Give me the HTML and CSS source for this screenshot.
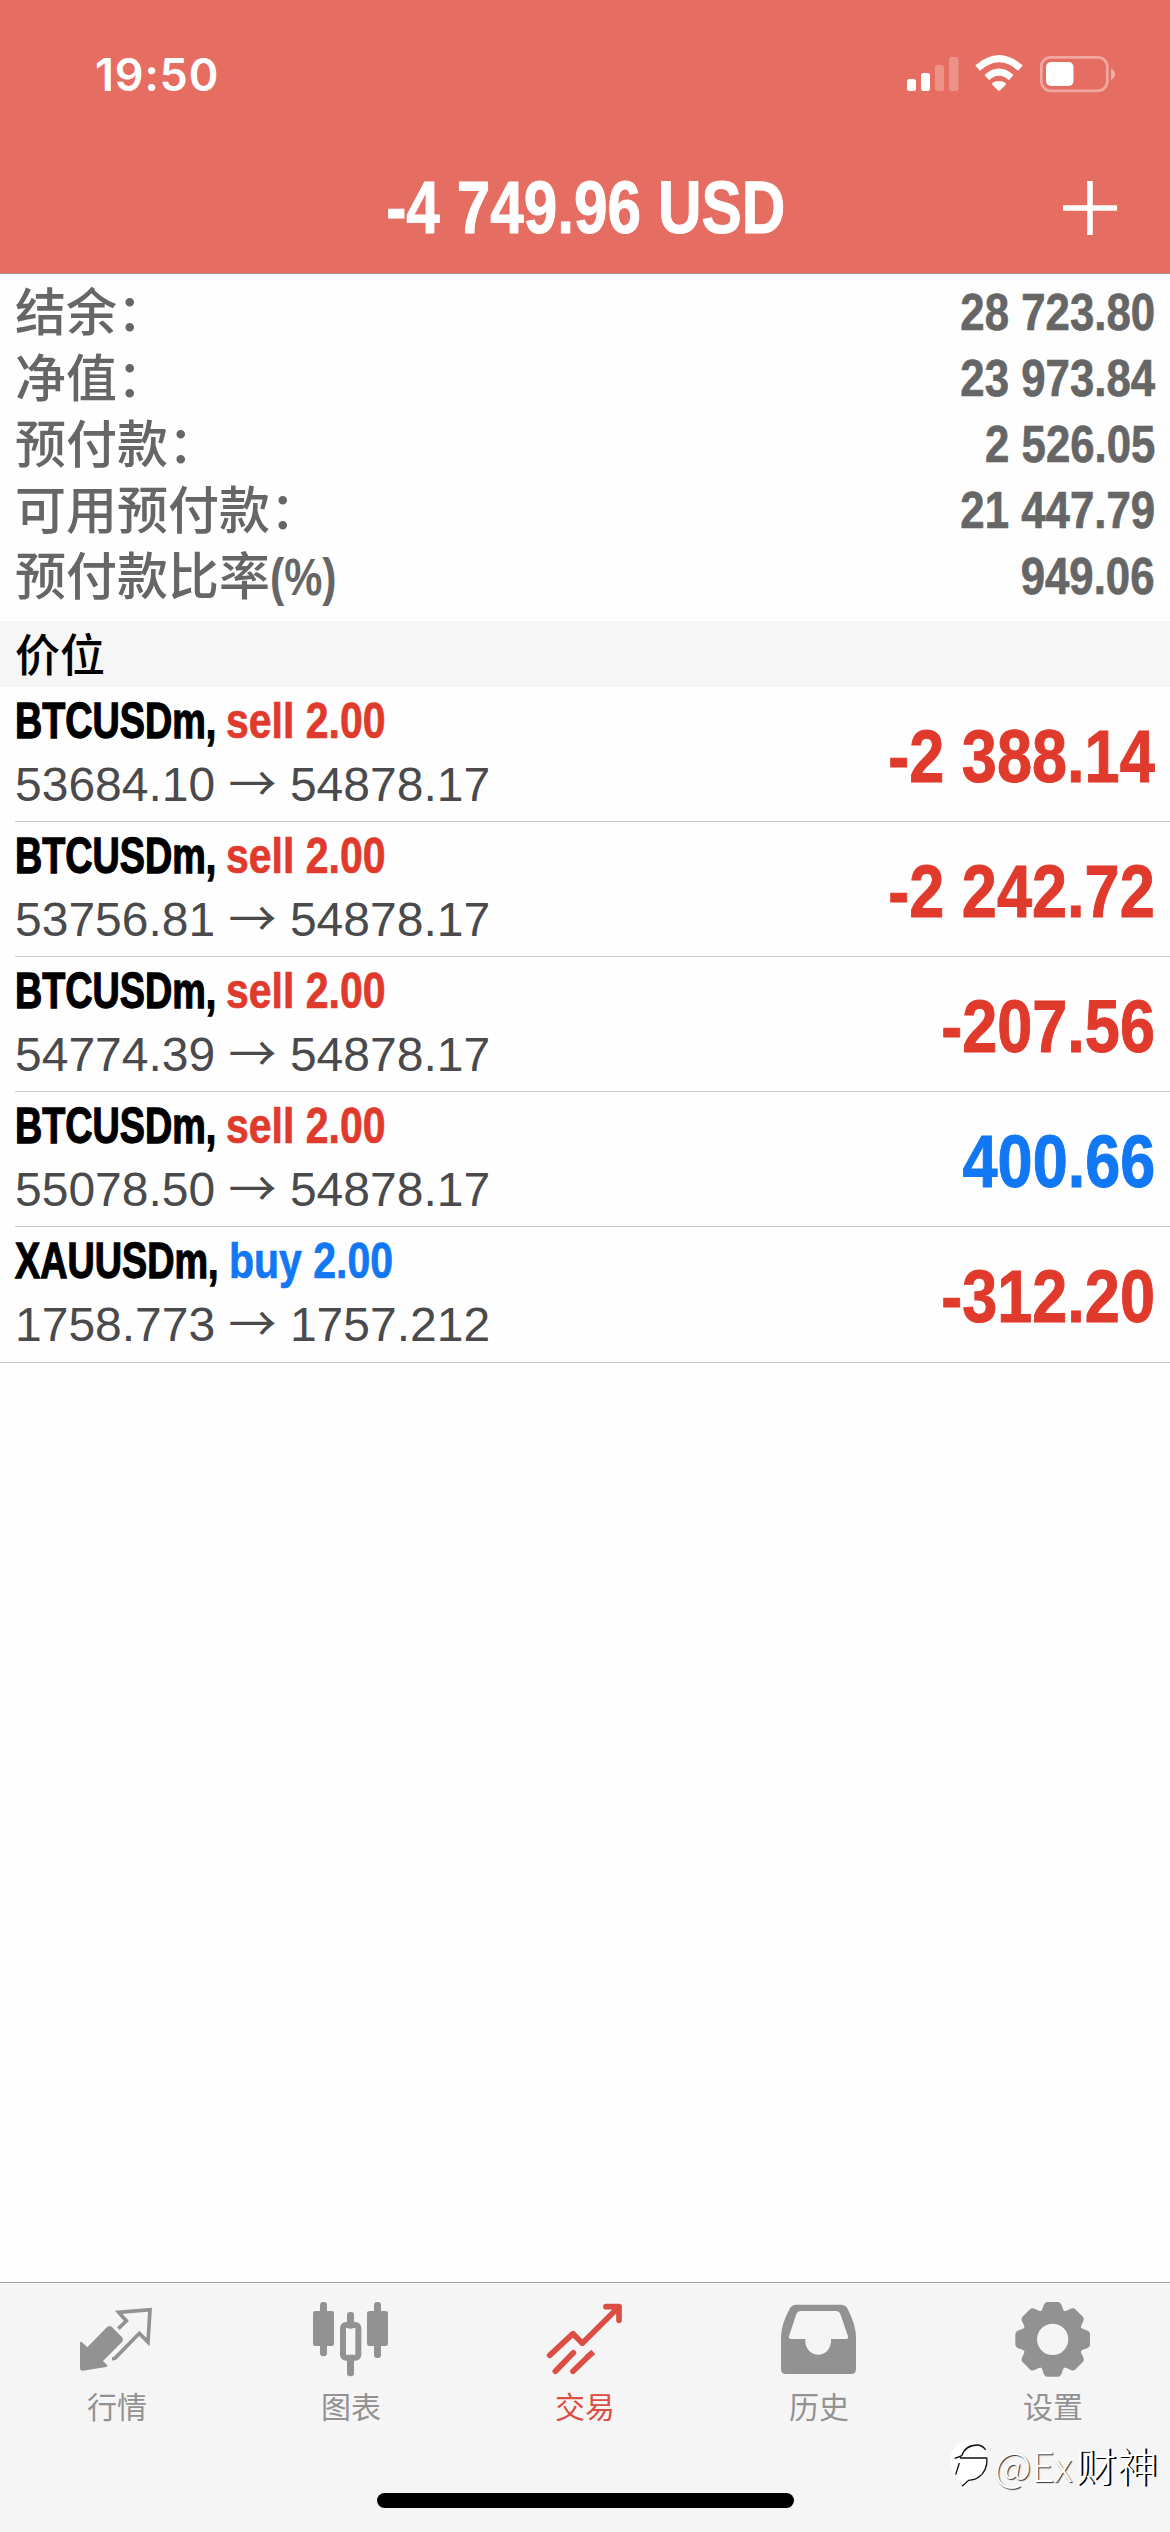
FILE: index.html
```html
<!DOCTYPE html>
<html lang="zh-CN">
<head>
<meta charset="utf-8">
<title>交易</title>
<link rel="stylesheet" href="styles.css">
</head>
<body>
<div class="screen">
  <header class="header">
    <div class="status">
      <span class="time">19:50</span>
      <svg class="status-icons" width="212" height="40" viewBox="905 54 212 40">
        <g fill="#fff">
          <rect x="907" y="79" width="9" height="12" rx="2.5"/>
          <rect x="921" y="73" width="9" height="18" rx="2.5"/>
          <g opacity=".25"><rect x="935" y="65" width="9" height="26" rx="2.5"/><rect x="949" y="57" width="9.500" height="34" rx="2.500"/></g>
          <path d="M999 81c-3.300 0-6 1.300-6.800 2.300-.4.500-.3 1 .1 1.400l5.700 5.700q1 .9 2 0l5.700-5.700c.4-.4.5-.9.100-1.400-.8-1-3.500-2.300-6.800-2.300z"/>
        </g>
        <path d="M986.800 77.600Q999 66.800 1011.200 77.600M977.600 68.200Q999 49 1020.400 68.200" fill="none" stroke="#fff" stroke-width="7"/>
        <rect x="1041.300" y="57.300" width="66" height="33.500" rx="9.500" fill="none" stroke="#fff" stroke-opacity=".4" stroke-width="2.800"/>
        <rect x="1046" y="62" width="27.500" height="24" rx="5" fill="#fff"/>
        <path d="M1111 68.500q4 2 4 5.700t-4 5.700z" fill="#fff" opacity=".45"/>
      </svg>
    </div>
    <div class="titlebar">
      <h1 class="title"><span>-4 749.96 USD</span></h1>
      <svg class="plus" width="54" height="54" viewBox="0 0 54 54"><path d="M0 27H54M27 0V54" stroke="#fff" stroke-width="5.600"/></svg>
    </div>
  </header>

  <section class="account">
    <div class="line"><span class="label">结余：</span><span class="num">28 723.80</span></div>
    <div class="line"><span class="label">净值：</span><span class="num">23 973.84</span></div>
    <div class="line"><span class="label">预付款：</span><span class="num">2 526.05</span></div>
    <div class="line"><span class="label">可用预付款：</span><span class="num">21 447.79</span></div>
    <div class="line"><span class="label">预付款比率<span class="unit">(%)</span></span><span class="num">949.06</span></div>
  </section>

  <h2 class="section">价位</h2>

  <main class="positions">
    <div class="position">
      <div class="info">
        <div class="deal"><b class="symbol">BTCUSDm,</b><b class="side sell">sell 2.00</b></div>
        <div class="prices">53684.10 <i>→</i> 54878.17</div>
      </div>
      <div class="profit sell">-2 388.14</div>
    </div>
    <div class="position">
      <div class="info">
        <div class="deal"><b class="symbol">BTCUSDm,</b><b class="side sell">sell 2.00</b></div>
        <div class="prices">53756.81 <i>→</i> 54878.17</div>
      </div>
      <div class="profit sell">-2 242.72</div>
    </div>
    <div class="position">
      <div class="info">
        <div class="deal"><b class="symbol">BTCUSDm,</b><b class="side sell">sell 2.00</b></div>
        <div class="prices">54774.39 <i>→</i> 54878.17</div>
      </div>
      <div class="profit sell">-207.56</div>
    </div>
    <div class="position">
      <div class="info">
        <div class="deal"><b class="symbol">BTCUSDm,</b><b class="side sell">sell 2.00</b></div>
        <div class="prices">55078.50 <i>→</i> 54878.17</div>
      </div>
      <div class="profit buy">400.66</div>
    </div>
    <div class="position">
      <div class="info">
        <div class="deal gold"><b class="symbol">XAUUSDm,</b><b class="side buy">buy 2.00</b></div>
        <div class="prices">1758.773 <i>→</i> 1757.212</div>
      </div>
      <div class="profit sell">-312.20</div>
    </div>
  </main>

  <nav class="tabs">
    <a class="tab">
      <svg width="80" height="80" viewBox="231 114 240 240">
        <path fill="currentColor" d="M240 249Q241 243 246 247L262 262 319 203Q328 194 336 201L366 232Q372 239 366 246L309 303 321 315Q325 320 318 321L249 332Q240 333 240 324Z"/>
        <path fill="none" stroke="currentColor" stroke-width="11" stroke-miterlimit="2.500" d="M355 206 379 183 356 157 450 149 444 246 418 220 348 292Q344 297 336 296"/>
      </svg><span>行情</span></a>
    <a class="tab">
      <svg width="80" height="80" viewBox="933 114 240 240" fill="currentColor">
        <rect x="960" y="126" width="21" height="163" rx="9"/><rect x="939" y="153" width="63" height="105" rx="7"/>
        <rect x="1122" y="126" width="21" height="168" rx="9"/><rect x="1101" y="153" width="63" height="105" rx="7"/>
        <rect x="1041" y="156" width="21" height="50" rx="9"/><rect x="1041" y="285" width="21" height="64" rx="9"/>
        <rect x="1029" y="195" width="46" height="98" rx="9" fill="none" stroke="currentColor" stroke-width="18"/>
      </svg><span>图表</span></a>
    <a class="tab active">
      <svg width="80" height="80" viewBox="135 114 240 240" fill="none" stroke="currentColor" stroke-width="17" stroke-linecap="round" stroke-linejoin="round">
        <path d="M149 286 219 221 247 250 357 140M318 140H357V181M166 334 220 278"/>
        <path d="M219 334 270 284"/><path stroke-linecap="butt" d="M260 293 280 276"/>
      </svg><span>交易</span></a>
    <a class="tab">
      <svg width="80" height="80" viewBox="837 114 240 240">
        <path fill="currentColor" fill-rule="evenodd" d="M889 134H1024Q1036 134 1042 145 1068 195 1068 232V328Q1068 342 1054 342H857Q843 342 843 328V228Q845 190 870 145 876 134 889 134ZM903 153Q893 153 889 162L867 229Q865 237 874 237H916V246C918 270 935 284 955 284S990 270 993 246V237H1038Q1046 237 1044 229L1021 162Q1017 153 1007 153Z"/>
      </svg><span>历史</span></a>
    <a class="tab">
      <svg width="80" height="80" viewBox="-120 -124 240 240">
        <defs><path id="tooth" d="M-17-112H17Q24-111 28-100 31-86 39-81L0-60-39-81Q-31-86-28-100-24-111-17-112Z"/></defs>
        <circle r="66" cx="-1" fill="none" stroke="currentColor" stroke-width="38"/>
        <g fill="currentColor" transform="translate(-1 0)"><use href="#tooth"/><use href="#tooth" transform="rotate(45)"/><use href="#tooth" transform="rotate(90)"/><use href="#tooth" transform="rotate(135)"/><use href="#tooth" transform="rotate(180)"/><use href="#tooth" transform="rotate(225)"/><use href="#tooth" transform="rotate(270)"/><use href="#tooth" transform="rotate(315)"/></g>
      </svg><span>设置</span></a>
    <div class="home"></div>
    <div class="watermark">
      <svg width="42" height="52" viewBox="144 550 126 156">
        <path fill="#fff" d="M150 606Q165 558 212 558 262 565 262 610 262 665 212 680L188 694 186 680Q150 660 150 606Z"/>
        <path fill="none" stroke="#111" stroke-width="4" d="M185 604Q196 570 235 571 250 574 257 586M164 611 184 604M180 610H262M178 625 167 660M261 612Q262 650 235 668 225 676 206 677L186 695"/>
      </svg><span class="handle">@Ex<em>财神</em></span>
    </div>
  </nav>
</div>
</body>
</html>
```
FILE: styles.css
```css
* { box-sizing: border-box; }
body { margin: 0; background: #fff; }

.screen {
  width: 1170px;
  height: 2532px;
  display: flex;
  flex-direction: column;
  overflow: hidden;
  background: #fefefe;
  font-family: "Liberation Sans", "Noto Sans CJK SC", sans-serif;
}

/* header */
.header {
  height: 274px;
  background: #e56d61;
  border-bottom: 1px solid #b08f92;
  color: #fff;
}
.status {
  height: 140px;
  padding: 54px 53px 0 95px;
  display: flex;
  justify-content: space-between;
  align-items: flex-start;
}
.time {
  font: 600 45px/42px Inter, sans-serif;
  letter-spacing: 0.8px;
}
.titlebar {
  height: 133px;
  padding: 0 53px 0 54px;
  display: grid;
  grid-template-columns: 54px 1fr 54px;
  align-items: center;
}
.title {
  grid-column: 2;
  margin: 0;
  font-size: 74px;
  line-height: 135px;
  text-align: center;
  white-space: nowrap;
  -webkit-text-stroke: 1px;
}
.title span { display: inline-block; transform: scaleX(.815); }

/* account summary */
.account { height: 347px; padding: 5px 15px 0; color: #666; }
.line {
  height: 66px;
  display: flex;
  justify-content: space-between;
  line-height: 67px;
}
.label {
  font-size: 51px;
  font-weight: 500;
  line-height: 69px;
}
.unit {
  display: inline-block;
  font-weight: 700;
  transform: scaleX(.84);
  transform-origin: left;
}
.num {
  font-size: 51.5px;
  font-weight: 700;
  transform: scaleX(.85);
  transform-origin: right;
  -webkit-text-stroke: .7px;
}

.section {
  margin: 0;
  height: 66px;
  padding-left: 15px;
  background: #f6f6f6;
  color: #000;
  font: 500 45px/64px "Noto Sans CJK SC", sans-serif;
}

/* positions */
.positions { flex: 1; }
.position {
  height: 135px;
  margin-left: 15px;
  padding-right: 15px;
  border-bottom: 1px solid #c6c8ca;
  display: flex;
  justify-content: space-between;
}
.position:last-child {
  height: 136px;
  margin-left: 0;
  padding-left: 15px;
}
.info { padding-top: 4px; }
.deal {
  display: grid;
  grid-template-columns: 211px 160px;
  font-size: 50px;
  line-height: 60px;
  white-space: nowrap;
}
.deal.gold { grid-template-columns: 214px 160px; }
.symbol, .side { width: max-content; transform-origin: left; }
.symbol { transform: scaleX(.755); -webkit-text-stroke: 1.3px; }
.side { transform: scaleX(.82); -webkit-text-stroke: .7px; }
.prices {
  color: #4a4a4c;
  font-size: 48px;
  line-height: 68px;
  white-space: nowrap;
}
.prices i { font: normal 48px/0 "Noto Sans CJK SC", sans-serif; }
.profit {
  font-size: 74px;
  font-weight: 700;
  line-height: 139px;
  height: 134px;
  transform: scaleX(.852);
  transform-origin: right;
  -webkit-text-stroke: 1px;
}
.sell { color: #e03a2c; }
.buy { color: #1277f3; }

/* tab bar */
.tabs {
  position: relative;
  height: 250px;
  border-top: 1px solid #a6a6a8;
  background: #f5f5f5;
  display: grid;
  grid-template-columns: repeat(5, 1fr);
}
.tab {
  padding-top: 15px;
  display: flex;
  flex-direction: column;
  align-items: center;
  color: #929292;
  font: 400 30px/44px "Noto Sans CJK SC", sans-serif;
}
.tab span { margin-top: 5px; }
.tab.active { color: #dc4e43; }
.home {
  position: absolute;
  left: 377px;
  bottom: 24px;
  width: 417px;
  height: 15px;
  border-radius: 8px;
  background: #000;
}
.watermark {
  position: absolute;
  left: 948px;
  bottom: 42px;
  display: flex;
  align-items: center;
  gap: 4px;
  color: #fff;
  font: 300 41px/52px "Noto Sans CJK SC", sans-serif;
  white-space: nowrap;
  text-shadow: 1px 1px 1px #333;
}
.watermark em { margin-left: 3px; font-style: normal; text-shadow: 2px 1px 0 #000; }
```
